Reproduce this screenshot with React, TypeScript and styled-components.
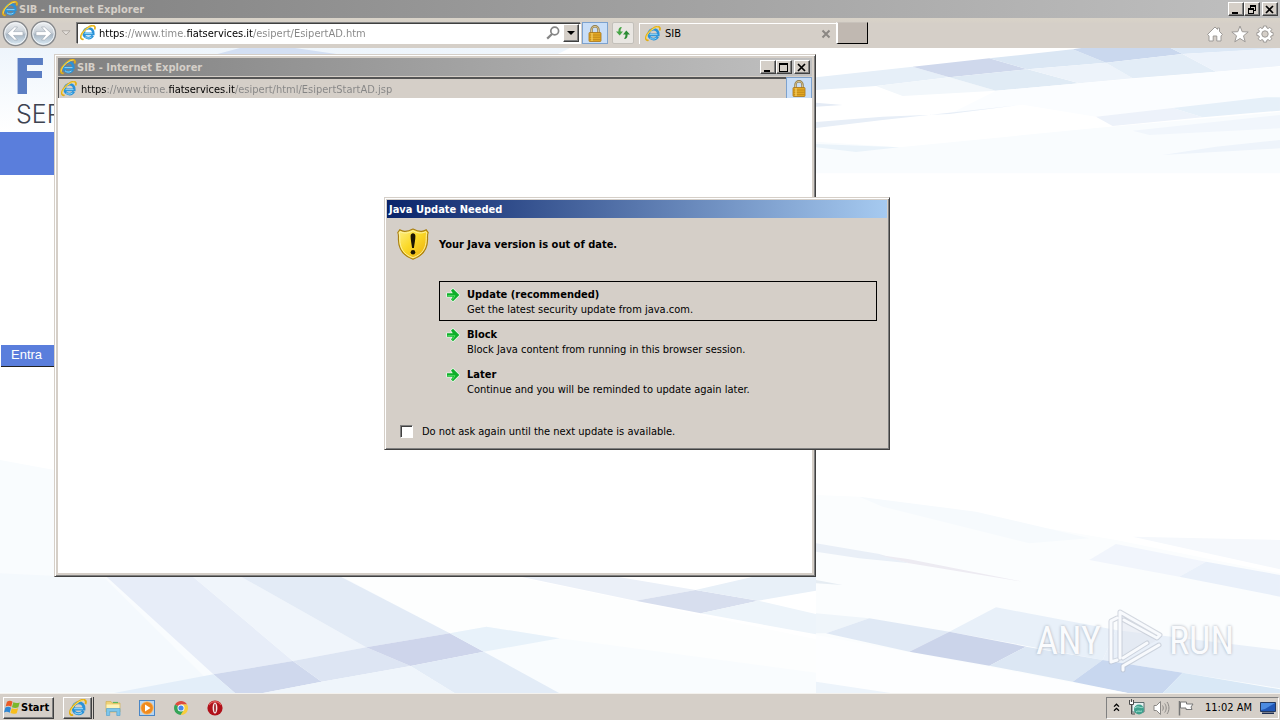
import React from "react";
import styled, { createGlobalStyle, css } from "styled-components";

const face = "#d5cfc8";
const shade = "#808080";
const dark = "#404040";
const uiFont = `"DejaVu Sans Condensed", "DejaVu Sans", sans-serif`;

const GlobalStyle = createGlobalStyle`
  *, *::before, *::after { box-sizing: border-box; }
  body { margin: 0; background: #fff; }
  button, input { font: inherit; color: inherit; margin: 0; padding: 0; }
  svg { display: block; flex: none; }
`;

const Screen = styled.div`
  position: relative;
  display: flex;
  flex-direction: column;
  min-height: 100vh;
  overflow: hidden;
  font: 11px/14px ${uiFont};
  color: #000;
`;

const raised = css`
  border: 1px solid;
  border-color: #fff ${dark} ${dark} #fff;
  box-shadow: inset -1px -1px 0 ${shade};
  background: ${face};
`;

const TitleBar = styled.header<{ $active?: boolean }>`
  display: flex;
  align-items: center;
  height: 18px;
  padding: 0 2px;
  gap: 1px;
  font-weight: bold;
  color: ${(p) => (p.$active ? "#fff" : face)};
  background: ${(p) =>
    p.$active
      ? "linear-gradient(90deg, #0a246a, #a6caf0)"
      : "linear-gradient(90deg, #808080, #c0c0c0)"};
`;

const TitleText = styled.h1`
  flex: 1;
  margin: 0;
  padding-top: 1px;
  font: inherit;
  white-space: nowrap;
`;

const CaptionButtons = styled.div`
  display: flex;
  & > :last-child { margin-left: 2px; }
`;

const CaptionButton = styled.button`
  ${raised}
  display: grid;
  place-items: center;
  width: 16px;
  height: 14px;
  color: #000;
`;

const Toolbar = styled.nav`
  display: flex;
  align-items: center;
  height: 30px;
  padding: 0 6px 0 2px;
  background: linear-gradient(#d9d3c8, ${face} 6px);
`;

const IconButton = styled.button`
  display: grid;
  place-items: center;
  border: 0;
  background: none;
`;

const History = styled.div`
  display: flex;
  gap: 1px;
  margin-right: 4px;
`;

const AddressBox = styled.div`
  display: flex;
  align-items: center;
  width: 504px;
  height: 21px;
  margin: 0 1px 0 6px;
  padding: 0 1px 0 2px;
  gap: 3px;
  background: #fff;
  border: 1px solid;
  border-color: ${dark} #fff #fff ${dark};
  box-shadow: -1px -1px 0 ${shade};
`;

const Address = styled.input<{ $from: number; $to: number; $scheme: number }>`
  flex: 1;
  min-width: 0;
  height: 17px;
  padding-top: 1px;
  border: 0;
  outline: 0;
  color: #777;
  -webkit-text-fill-color: transparent;
  background: linear-gradient(
    90deg,
    #000 ${(p) => p.$scheme}px,
    #858585 ${(p) => p.$scheme}px ${(p) => p.$from}px,
    #000 ${(p) => p.$from}px ${(p) => p.$to}px,
    #858585 ${(p) => p.$to}px
  );
  background-clip: text;
  -webkit-background-clip: text;
`;

const DropButton = styled.button`
  ${raised}
  display: grid;
  place-items: center;
  width: 16px;
  height: 18px;
`;

const LockButton = styled.button`
  display: grid;
  place-items: center;
  width: 26px;
  height: 22px;
  border: 1px solid #7da2ce;
  background: #c9def7;
`;

const RefreshButton = styled(LockButton)`
  width: 22px;
  margin: 0 5px 0 4px;
  border-color: #c3c0ba;
  border-radius: 2px;
  background: #e9e6e2;
`;

const Tab = styled.div`
  display: flex;
  align-items: center;
  gap: 4px;
  width: 197px;
  height: 21px;
  padding: 0 5px;
  border-top: 1px solid #fff;
  border-left: 1px solid #fff;
`;

const TabLabel = styled.span`
  flex: 1;
  padding-top: 1px;
`;

const NewTab = styled.button`
  width: 32px;
  height: 22px;
  border: solid;
  border-width: 1px 1px 1px 2px;
  border-color: #c8c2bb #000 #000 #fff;
  outline: 0;
  background: #c0b8b1;
  margin-right: auto;
`;

const Tools = styled.div`
  display: flex;
  gap: 7px;
  padding-top: 2px;
`;

const Desktop = styled.main`
  position: relative;
  display: flex;
  flex-direction: column;
  align-items: flex-start;
  flex: 1;
  overflow: hidden;
`;

const Backdrop = styled.svg`
  position: absolute;
  inset: 0;
  width: 100%;
  height: 100%;
`;

const Site = styled.section`
  position: relative;
  width: 400px;
`;

const Brand = styled.div`
  padding-left: 13px;
  font: bold 50px/58px "DejaVu Sans", sans-serif;
  color: #5a7dc3;
`;

const BrandLine = styled.div`
  padding: 0 0 10px 16px;
  font: 300 25px/16px Inter, sans-serif;
  color: #3d4350;
`;

const SiteBar = styled.div`
  height: 43px;
  background: #5a7edc;
`;

const EnterButton = styled.button`
  height: 22px;
  width: 70px;
  margin: 170px 0 0 1px;
  padding: 0 0 2px 10px;
  text-align: left;
  font: 13px/18px "Liberation Sans", sans-serif;
  color: #fff;
  background: #5a7edc;
  border: 0;
  border-bottom: 1px solid #222;
`;

const Watermark = styled.div`
  position: absolute;
  right: 46px;
  bottom: 20px;
  display: flex;
  align-items: center;
  gap: 4px;
  font: 400 38px/64px "Roboto Condensed", "Open Sans Condensed", Roboto, sans-serif;
  color: #fafbfd;
  text-shadow: 0 0 3px #a4abb7;
`;

const frame = css`
  position: absolute;
  display: flex;
  flex-direction: column;
  border: 1px solid;
  border-color: ${face} ${dark} ${dark} ${face};
  box-shadow: inset 1px 1px 0 #fff, inset -1px -1px 0 ${shade};
  background: ${face};
`;

const Popup = styled.section`
  ${frame}
  left: 54px;
  top: 54px;
  width: 762px;
  height: 523px;
  padding: 3px;
`;

const PopupBar = styled.div`
  display: flex;
  height: 22px;
  border-top: 1px solid ${face};
`;

const PopupAddress = styled.div`
  flex: 1;
  display: flex;
  align-items: center;
  gap: 4px;
  padding-left: 2px;
  border-top: 2px solid #555;
  border-left: 1px solid #555;
`;

const PopupPage = styled.div`
  flex: 1;
  background: #fff;
`;

const Dialog = styled.section`
  ${frame}
  left: 384px;
  top: 197px;
  width: 506px;
  padding: 2px;
`;

const DialogBody = styled.div`
  padding: 10px 10px 7px;
`;

const Notice = styled.div`
  display: flex;
  align-items: center;
  gap: 10px;
  height: 32px;
`;

const Strong = styled.strong`
  display: block;
  line-height: 15px;
`;

const Choices = styled.div`
  display: flex;
  flex-direction: column;
  margin: 21px 0 22px 42px;
`;

const Choice = styled.button<{ $focused?: boolean }>`
  display: flex;
  gap: 6px;
  padding: 5px 5px 3px;
  border: 1px solid ${(p) => (p.$focused ? "#000" : "transparent")};
  background: none;
  text-align: left;
  line-height: 15px;
`;

const Check = styled.label`
  display: flex;
  align-items: center;
  gap: 9px;
  height: 17px;
  padding-left: 3px;
`;

const CheckBox = styled.input`
  appearance: none;
  width: 13px;
  height: 13px;
  background: #fff;
  border: 1px solid;
  border-color: ${shade} #fff #fff ${shade};
  box-shadow: inset 1px 1px 0 ${dark};
`;

const Taskbar = styled.footer`
  display: flex;
  align-items: center;
  height: 27px;
  padding: 1px 1px 0 3px;
  border-top: 1px solid #f4f2ee;
  background: ${face};
`;

const StartButton = styled.button`
  ${raised}
  display: flex;
  align-items: center;
  width: 51px;
  height: 22px;
  font-weight: bold;
`;

const TaskGroup = styled.div`
  display: flex;
  width: 31px;
  height: 22px;
  margin: 0 10px 0 9px;
  border-right: 1px solid ${dark};
`;

const TaskButton = styled.button`
  ${raised}
  flex: 1;
  display: grid;
  place-items: center;
  margin-right: 1px;
`;

const Launchers = styled.div`
  display: flex;
  gap: 16px;
  flex: 1;
`;

const Tray = styled.div`
  display: flex;
  align-items: center;
  gap: 8px;
  width: 173px;
  height: 22px;
  padding: 0 2px 0 6px;
  border: 1px solid;
  border-color: ${shade} #fff #fff ${shade};
`;

const Clock = styled.time`
  flex: 1;
  text-align: right;
  white-space: nowrap;
`;

const IeIcon = ({ size = 16 }: { size?: number }) => (
  <svg width={size} height={size} viewBox="0 0 16 16" fill="none" aria-hidden="true">
    <path d="M4 8.900h9.300c.2-3.700-2-5.600-4.700-5.600-2.900 0-4.900 2.100-4.900 4.900s2 4.900 4.900 4.900c1.900 0 3.400-.9 4.200-2.400" stroke="#2a92d8" strokeWidth="2.600" />
    <path d="M4.500 8.600h8M3.400 7.500C4 5 6 3.200 8.500 3.200M5 11.800c1.500 1.500 4.500 1.800 6.500.2" stroke="#8ad4f8" strokeWidth="1" />
    <path d="M3.600 14.200C.4 15 0 11.700 2.200 8.300 5.200 3.600 11-.3 14 .9c1.300.6 1.200 2 .6 3.600" stroke="#e3ae12" strokeWidth="1.700" />
    <path d="M1.500 12.500C1 10.500 3.500 6.500 6.500 4.100 9 2.100 12 .8 13.500 1.200" stroke="#fbe472" strokeWidth=".8" />
  </svg>
);

const NavIcon = ({ back }: { back?: boolean }) => (
  <svg width="27" height="27" viewBox="0 0 27 27" aria-hidden="true">
    <defs>
      <linearGradient id={back ? "orbB" : "orbF"} x1="0" y1="0" x2="0" y2="1">
        <stop offset="0" stopColor="#f1f3f5" />
        <stop offset=".48" stopColor="#c6ced6" />
        <stop offset=".55" stopColor="#a9b7c4" />
        <stop offset="1" stopColor="#dcecf7" />
      </linearGradient>
    </defs>
    <circle cx="13.500" cy="13.500" r="12" fill={`url(#${back ? "orbB" : "orbF"})`} stroke="#87898c" strokeWidth="1.400" />
    <circle cx="13.500" cy="13.500" r="10.800" fill="none" stroke="#f4f7fa" strokeWidth="1" />
    <path
      transform={back ? undefined : "matrix(-1 0 0 1 27 0)"}
      d="M5.500 13.500l7-6.500h3l-4 4.600h9.500v3.800h-9.500l4 4.600h-3z"
      fill="#fff"
      stroke="#9aa5b0"
      strokeWidth=".6"
    />
  </svg>
);

const LockIcon = () => (
  <svg width="14" height="17" viewBox="0 0 14 17" aria-hidden="true">
    <path d="M3.500 8V4.800a3.500 3.500 0 0 1 7 0V8" fill="none" stroke="#8f7b4c" strokeWidth="2.400" />
    <path d="M3.500 8V4.800a3.500 3.500 0 0 1 7 0V8" fill="none" stroke="#d8c48c" strokeWidth="1" />
    <rect x="1" y="7.500" width="12" height="9" rx=".8" fill="#e2a824" stroke="#a87416" strokeWidth=".8" />
    <path d="M1.500 10h11M1.500 12.300h11M1.500 14.600h11" stroke="#bd8418" strokeWidth=".8" />
    <path d="M4 8v8" stroke="#f7d26a" strokeWidth="1.200" />
  </svg>
);

const SearchIcon = () => (
  <svg width="14" height="14" viewBox="0 0 14 14" fill="none" stroke="#858585" aria-hidden="true">
    <circle cx="8.700" cy="5" r="3.900" strokeWidth="1.700" />
    <path d="M6 8L1.200 12.600" strokeWidth="2.200" />
  </svg>
);

const RefreshIcon = () => (
  <svg width="16" height="14" viewBox="0 0 16 14" aria-hidden="true">
    <path d="M5.800 1C3.800 1.600 3.300 3.500 3.500 5.500H1L4.700 9.600 8 5.500H5.600C5.400 4 5.600 2.700 7 1.500z" fill="#46a546" />
    <path d="M10.200 13c2-.6 2.500-2.500 2.300-4.500H15l-3.700-4.100L8 8.500h2.400c.2 1.500 0 2.800-1.400 4z" fill="#2b8b34" />
  </svg>
);

const MinimizeGlyph = () => (
  <svg width="10" height="9" viewBox="0 0 10 9" aria-hidden="true"><path d="M1 7h6v2H1z" /></svg>
);
const MaximizeGlyph = () => (
  <svg width="10" height="9" viewBox="0 0 10 9" aria-hidden="true"><path fillRule="evenodd" d="M0 0h9v9H0zM1 2v6h7V2z" /></svg>
);
const RestoreGlyph = () => (
  <svg width="10" height="9" viewBox="0 0 10 9" aria-hidden="true">
    <path fillRule="evenodd" d="M3 0h6v6H7V5h1V2H4v1H3zM1 3h6v6H1zM2 5v3h4V5z" />
  </svg>
);
const CloseGlyph = () => (
  <svg width="10" height="9" viewBox="0 0 10 9" aria-hidden="true"><path d="M1 1l7 7M8 1L1 8" stroke="#000" strokeWidth="1.700" /></svg>
);
const DropGlyph = () => (
  <svg width="8" height="4" viewBox="0 0 8 4" aria-hidden="true"><path d="M0 0h8L4 4z" /></svg>
);
const RecentGlyph = () => (
  <svg width="10" height="6" viewBox="0 0 10 6" aria-hidden="true"><path d="M1 .8h8L5 5z" fill="#e4e0dc" stroke="#a9a49e" strokeWidth=".9" /></svg>
);

const outline = { fill: "#fff", stroke: "#9d9a97", strokeWidth: 1 };

const HomeIcon = () => (
  <svg width="18" height="18" viewBox="0 0 18 18" aria-hidden="true">
    <path {...outline} d="M9 2L1.500 9.500 3 10.800V16h4.200v-5h3.600v5H15v-5.200l1.500-1.300-3-3V3H11.500v1.400z" />
  </svg>
);
const StarIcon = () => (
  <svg width="18" height="18" viewBox="0 0 18 18" aria-hidden="true">
    <path {...outline} d="M9 1l2.200 5.700 6 .3-4.700 3.800 1.700 6L9 13.500l-5.200 3.300 1.700-6L.8 7l6-.3z" />
  </svg>
);
const GearIcon = () => (
  <svg width="18" height="18" viewBox="0 0 18 18" aria-hidden="true">
    <path
      {...outline}
      fillRule="evenodd"
      d="M7.500 1h3l.4 2 1.200.5L13.800 2.400l2 2-1.200 1.700.5 1.200 2 .4v2.800l-2 .4-.5 1.200 1.200 1.700-2 2-1.700-1.200-1.200.5-.4 2h-3l-.4-2-1.200-.5-1.700 1.200-2-2 1.200-1.700-.5-1.200-2-.4V7.700l2-.4.5-1.200L2.200 4.400l2-2 1.700 1.100L7.100 3zM9 5.800a3.200 3.200 0 1 0 0 6.400 3.200 3.200 0 0 0 0-6.400z"
    />
  </svg>
);

const ShieldIcon = () => (
  <svg width="32" height="32" viewBox="0 0 32 32" aria-hidden="true">
    <defs>
      <linearGradient id="gold" x1="0" y1="0" x2="1" y2="1">
        <stop offset="0" stopColor="#fdf08a" />
        <stop offset=".45" stopColor="#fbd928" />
        <stop offset="1" stopColor="#e9a90c" />
      </linearGradient>
    </defs>
    <path d="M16 1c-3 1.600-5.500 2.600-8.500 2.400C5.500 3.200 4 2.500 2.800 1.800L.8 4.500c1 2 .6 4 .6 7C1.600 20.500 5 27.500 16 31.200c11-3.700 14.400-10.700 14.600-19.700 0-3-.4-5 .6-7l-2-2.700c-1.200.7-2.700 1.400-4.700 1.600C21.500 3.600 19 2.600 16 1z" fill="url(#gold)" stroke="#a87e10" strokeWidth="1.100" />
    <path d="M16 2.700c-3 1.600-5.700 2.500-8.700 2.200-1.600-.2-3-.6-4.100-1.200L2.200 5c.7 2 .5 4 .6 6.500C3 20 6.300 26.300 16 29.800c9.700-3.500 13-9.800 13.200-18.300.1-2.500-.1-4.500.6-6.500l-1-1.300c-1.100.6-2.500 1-4.100 1.200-3 .3-5.700-.6-8.700-2.200z" fill="none" stroke="#fdf3a8" strokeWidth=".9" />
    <path d="M13.600 8c0-3.600 4.800-3.600 4.800 0 0 4-1 8-1.500 12h-1.800c-.5-4-1.500-8-1.500-12z" fill="#1c1503" />
    <circle cx="16" cy="24.300" r="2.300" fill="#1c1503" />
  </svg>
);

const ArrowIcon = () => (
  <svg width="16" height="16" viewBox="0 0 16 16" aria-hidden="true">
    <path d="M2 6.300h5.800L6 3.500 8 1.800 14.300 8 8 14.200 6 12.500l1.800-2.800H2z" fill="#0fae2b" stroke="#eaf8ea" strokeWidth="1.600" strokeLinejoin="round" paintOrder="stroke" />
    <path d="M2.500 8.700h7.500L7.500 12.500" fill="none" stroke="#4ee060" strokeWidth="1" />
  </svg>
);

const WindowsIcon = () => (
  <svg width="17" height="17" viewBox="0 0 16 16" aria-hidden="true">
    <path d="M2.800 2.500C5 1.300 6.500 1.500 8 2.600L6.800 7.300C5.200 6.300 3.500 6.200 1.500 7z" fill="#ea5a24" />
    <path d="M8.800 3c1.800 1 3.700 1 6 .2l-1.300 4.600c-2 .8-4 .8-6-.1z" fill="#7ab82c" />
    <path d="M1.300 8c2-.9 3.700-.8 5.300.2l-1.200 4.700C3.800 12 2 11.800 0 12.600z" fill="#2f87d3" />
    <path d="M7.300 8.600c2 1 4 .9 6 .1L12 13.300c-2 .8-4 .8-5.900-.1z" fill="#f8be1c" />
  </svg>
);

const FolderIcon = () => (
  <svg width="18" height="18" viewBox="0 0 18 18" aria-hidden="true">
    <path d="M2 2.500h5l1 1.500h8V13H2z" fill="#efd276" stroke="#d3b254" strokeWidth=".7" />
    <path d="M2.500 5.500h13v4h-13z" fill="#fdf3b8" />
    <path d="M2.500 9.500h13.500v7h-3.200V12.500H5.700v4H2.500z" fill="#7cc6ec" stroke="#5aa5d0" strokeWidth=".7" />
    <path d="M9 3.500h5" stroke="#5cb85c" strokeWidth="1.200" />
  </svg>
);

const PlayerIcon = () => (
  <svg width="18" height="18" viewBox="0 0 18 18" aria-hidden="true">
    <rect x="1.500" y="1.500" width="15" height="15" fill="#b6d5f2" stroke="#4a86c5" />
    <circle cx="9" cy="9" r="6.300" fill="#f08a1d" stroke="#f9c37c" strokeWidth=".8" />
    <path d="M7 5.500v7l5.500-3.500z" fill="#fff" />
  </svg>
);

const ChromeIcon = () => (
  <svg width="18" height="18" viewBox="0 0 18 18" aria-hidden="true">
    <path d="M9 9L3 5.500A7 7 0 0 1 15.100 5.500H9z" fill="#dd4b3e" />
    <path d="M9 9l.2 7A7 7 0 0 0 15.100 5.500H9z" fill="#f8cd3c" />
    <path d="M9 9L3 5.500A7 7 0 0 0 8.500 16L12 10.800z" fill="#35a457" />
    <circle cx="9" cy="9" r="3.500" fill="#fff" />
    <circle cx="9" cy="9" r="2.600" fill="#4788e8" />
  </svg>
);

const OperaIcon = () => (
  <svg width="18" height="18" viewBox="0 0 18 18" aria-hidden="true">
    <circle cx="9" cy="9" r="7.600" fill="#b01019" />
    <path d="M3 6a7 7 0 0 1 12 0" fill="none" stroke="#e2605f" strokeWidth="1.200" />
    <ellipse cx="9" cy="9" rx="2.400" ry="5.600" fill="#f6e6e6" />
    <ellipse cx="9" cy="9" rx=".8" ry="4.200" fill="#8f0b12" />
  </svg>
);

const ChevronsIcon = () => (
  <svg width="7" height="9" viewBox="0 0 7 9" fill="none" stroke="#000" strokeWidth="1.300" aria-hidden="true">
    <path d="M1 3.600l2.500-2.400L6 3.600M1 7.800l2.500-2.400L6 7.800" />
  </svg>
);
const NetworkIcon = () => (
  <svg width="17" height="17" viewBox="0 0 17 17" aria-hidden="true">
    <path d="M4 3.500h12V13H4z" fill="#e9f3f3" stroke="#5d6c6e" />
    <circle cx="11" cy="10.500" r="5" fill="#3fa08d" />
    <path d="M7 9c3-3 6 1 8-1M8 13c2-2 4 0 6-1" stroke="#a4e2d2" fill="none" />
    <path d="M1.500 2.500h4v3h-4z" fill="#fff" />
    <path d="M1.500 1v4.500h4V1M3.500 0v3M3.500 5.500V15H7" stroke="#4c4c4c" fill="none" />
  </svg>
);
const SpeakerIcon = () => (
  <svg width="17" height="16" viewBox="0 0 17 16" fill="none" stroke="#8b8885" aria-hidden="true">
    <path d="M1 5.500h2.500L7.500 1.500v13l-4-4H1z" fill="#fff" />
    <path d="M9.500 5.500c1 1.500 1 3.500 0 5M11.700 3.500c2 2.700 2 6.300 0 9M14 2c2.600 3.500 2.600 8.500 0 12" />
  </svg>
);
const FlagIcon = () => (
  <svg width="16" height="16" viewBox="0 0 16 16" aria-hidden="true">
    <path d="M1.500 1v14.500" stroke="#777" strokeWidth="1.500" />
    <path d="M2.500 2h6v2H15l-2 3 1 2.500H8V8H2.500z" fill="#fff" stroke="#777" />
  </svg>
);
const DisplayIcon = () => (
  <svg width="16" height="14" viewBox="0 0 16 14" aria-hidden="true">
    <path d="M.5 1.500h15v9H.5z" fill="#2157b5" stroke="#24395f" />
    <path d="M1 2h14L5 8 1 9z" fill="#4c8be0" />
    <path d="M2 11.500h12v1.500H2z" fill="#1c2d52" />
  </svg>
);
const PlayMark = () => (
  <svg width="60" height="64" viewBox="0 0 60 64" fill="none" strokeLinejoin="round" strokeLinecap="round" aria-hidden="true">
    <path d="M15 4v46L51 32z" fill="#dfe4ee" opacity=".5" />
    <g stroke="#b9c0cc" strokeWidth="5" opacity=".6">
      <path d="M12 9L6 12v41l6-2M15 49V3l40 23-3 3L19 11M18 49l24-15M18 61v-4l36-21" />
    </g>
    <g stroke="#f8fafd" strokeWidth="3">
      <path d="M12 9L6 12v41l6-2M15 49V3l40 23-3 3L19 11M18 49l24-15M18 61v-4l36-21" />
    </g>
  </svg>
);

type Tile = [points: string, fill: string];

const upperTiles: Tile[] = [
  ["0,112 290,80 400,112 180,138 0,150", "#e6eff8"],
  ["290,80 520,55 635,88 400,112", "#cfd8ec"],
  ["520,55 770,28 870,68 635,88", "#dbe7f4"],
  ["770,28 810,22 1060,22 1100,42 870,68", "#cad8ee"],
  ["1060,22 1392,22 1392,26 1100,42", "#dce8f6"],
  ["180,138 400,112 540,152 260,168", "#f2f7fb"],
  ["400,112 635,88 790,130 540,152", "#e0ebf5"],
  ["635,88 870,68 950,115 790,130", "#edf3fa"],
  ["870,68 1100,42 1200,95 950,115", "#e3edf7"],
  ["1100,42 1392,24 1392,78 1200,95", "#edf3fb"],
  ["790,130 1392,80 1392,172 840,230 620,194 400,222 540,152", "#fbfdff"],
  ["0,246 200,230 400,222 620,194 200,240 0,264", "#e7eef7"],
  ["0,188 80,195 0,200", "#e4ebf5"],
  ["840,230 1070,204 1160,232 890,258", "#edf2fa"],
  ["1070,204 1350,172 1392,172 1392,212 1160,232", "#e6f0f9"],
  ["0,305 250,322 840,264 1392,216 1392,400 0,400", "#f9fcfe"],
  ["0,312 250,322 120,336 0,322", "#eaf3fa"],
  ["950,272 1392,225 1392,265 1000,285", "#f1f6fc"],
  ["1200,320 1392,300 1392,325 1040,345", "#eef4fb"],
];

const lowerTiles: Tile[] = [
  ["0,285 130,290 900,420 1392,520 1392,877 0,877", "#fbfdfe"],
  ["130,290 480,335 820,415 640,430 200,320", "#f6fafd"],
  ["0,430 190,462 280,490 130,475 0,455", "#e9eff7"],
  ["190,465 280,478 620,545 280,490", "#edebf2"],
  ["0,540 80,555 0,550", "#e6edf3"],
  ["900,432 1170,485 1090,530 820,480", "#f1f5fc"],
  ["1170,485 1392,525 1392,590 1090,530", "#e9f0fa"],
  ["950,410 1392,420 1392,508", "#f5f8fc"],
  ["0,640 160,655 30,700 0,700", "#eff5fa"],
  ["160,655 400,695 280,755 30,700", "#e0e9f5"],
  ["540,622 900,690 860,780 400,695", "#e8f0f9"],
  ["900,690 1392,750 1392,865 1100,818 860,780", "#e9f0f9"],
  ["400,695 630,740 520,797 280,755", "#cbd4ea"],
  ["630,740 860,780 770,845 520,797", "#dce7f4"],
  ["860,780 1100,818 1040,880 940,880 770,845", "#c8d7ef"],
  ["1100,818 1392,868 1392,880 1040,880", "#d9e8f6"],
  ["0,705 940,880 0,880", "#fdfeff"],
  ["0,845 230,880 0,880", "#edf4fb"],
];

const leftTiles: Tile[] = [
  ["0,300 104,330 104,650 800,650 1568,850 1568,1000 0,1000", "#f9fcfe"],
  ["0,640 200,655 420,997 0,997", "#f4f9fd"],
  ["660,655 1000,655 1568,840 1568,940 1070,835 930,800 860,820", "#fdfefe"],
  ["200,645 365,645 560,903 408,943", "#e7edf8"],
  ["365,645 455,645 700,862 560,903", "#f0f5fb"],
  ["455,645 645,645 860,820 700,862", "#e3ebf6"],
  ["408,943 560,903 615,965 500,1000 450,1000", "#cfd8ed"],
  ["560,903 700,862 785,918 615,965", "#dde5f3"],
  ["700,862 860,820 925,875 785,918", "#ced5eb"],
  ["860,820 930,800 1070,835 925,875", "#e8f2fa"],
  ["785,918 925,875 1070,1000 870,1000", "#e3ecf7"],
  ["615,965 785,918 870,1000 500,1000", "#eff5fb"],
  ["408,943 450,1000 215,1000", "#e3eef9"],
  ["980,645 1160,645 1330,690 1215,722", "#ebf0f8"],
  ["1215,722 1330,690 1450,722 1340,760", "#d7deee"],
  ["1330,690 1440,650 1568,650 1568,690 1450,722", "#e8f0f8"],
  ["1340,760 1450,722 1568,765 1568,825", "#edf4fa"],
];

const Tiles = ({ tiles }: { tiles: Tile[] }) => (
  <>
    {tiles.map(([points, fill]) => (
      <polygon key={points} points={points} fill={fill} />
    ))}
  </>
);

const choices = [
  { title: "Update (recommended)", text: "Get the latest security update from java.com." },
  { title: "Block", text: "Block Java content from running in this browser session." },
  { title: "Later", text: "Continue and you will be reminded to update again later." },
];

export default function App() {
  return (
    <Screen>
      <GlobalStyle />
      <TitleBar>
        <IeIcon />
        <TitleText>SIB - Internet Explorer</TitleText>
        <CaptionButtons>
          <CaptionButton aria-label="Minimize"><MinimizeGlyph /></CaptionButton>
          <CaptionButton aria-label="Restore"><RestoreGlyph /></CaptionButton>
          <CaptionButton aria-label="Close"><CloseGlyph /></CaptionButton>
        </CaptionButtons>
      </TitleBar>
      <Toolbar>
        <History>
          <IconButton aria-label="Back"><NavIcon back /></IconButton>
          <IconButton aria-label="Forward"><NavIcon /></IconButton>
        </History>
        <IconButton aria-label="Recent pages"><RecentGlyph /></IconButton>
        <AddressBox>
          <IeIcon />
          <Address aria-label="Address" defaultValue="https://www.time.fiatservices.it/esipert/EsipertAD.htm" $scheme={26} $from={88} $to={154} />
          <IconButton aria-label="Search"><SearchIcon /></IconButton>
          <DropButton aria-label="Show addresses"><DropGlyph /></DropButton>
        </AddressBox>
        <LockButton aria-label="Security report"><LockIcon /></LockButton>
        <RefreshButton aria-label="Refresh"><RefreshIcon /></RefreshButton>
        <Tab>
          <IeIcon />
          <TabLabel>SIB</TabLabel>
          <IconButton aria-label="Close tab">
            <svg width="10" height="10" viewBox="0 0 10 10" aria-hidden="true"><path d="M1.500 1.500l7 7M8.500 1.500l-7 7" stroke="#8b8783" strokeWidth="2" /></svg>
          </IconButton>
        </Tab>
        <NewTab aria-label="New tab" />
        <Tools>
          <IconButton aria-label="Home"><HomeIcon /></IconButton>
          <IconButton aria-label="Favorites"><StarIcon /></IconButton>
          <IconButton aria-label="Tools"><GearIcon /></IconButton>
        </Tools>
      </Toolbar>

      <Desktop>
        <Backdrop viewBox="0 48 1280 645" preserveAspectRatio="xMidYMid slice" aria-hidden="true">
          <defs>
            <linearGradient id="wash" x1="0" y1="0" x2="0" y2="1">
              <stop offset="0" stopColor="#eef5fc" />
              <stop offset="1" stopColor="#ffffff" />
            </linearGradient>
          </defs>
          <polygon points="0,48 570,48 400,132 0,132" fill="url(#wash)" />
          <polygon points="240,48 295,48 350,56 210,56" fill="#d3dff3" />
          <g transform="translate(816 40) scale(.3333)"><Tiles tiles={upperTiles} /></g>
          <g transform="translate(0 360) scale(.523 .3333)"><Tiles tiles={leftTiles} /></g>
          <g transform="translate(816 400) scale(.3333)"><Tiles tiles={lowerTiles} /></g>
        </Backdrop>
        <Site>
          <Brand>F</Brand>
          <BrandLine>SER</BrandLine>
          <SiteBar />
          <EnterButton>Entra</EnterButton>
        </Site>
        <Watermark>
          <span>ANY</span>
          <PlayMark />
          <span>RUN</span>
        </Watermark>
      </Desktop>

      <Taskbar>
        <StartButton><WindowsIcon />Start</StartButton>
        <TaskGroup>
          <TaskButton aria-label="Internet Explorer"><IeIcon size={18} /></TaskButton>
        </TaskGroup>
        <Launchers>
          <IconButton aria-label="Explorer"><FolderIcon /></IconButton>
          <IconButton aria-label="Media Player"><PlayerIcon /></IconButton>
          <IconButton aria-label="Chrome"><ChromeIcon /></IconButton>
          <IconButton aria-label="Opera"><OperaIcon /></IconButton>
        </Launchers>
        <Tray>
          <ChevronsIcon />
          <NetworkIcon />
          <SpeakerIcon />
          <FlagIcon />
          <Clock>11:02 AM</Clock>
          <DisplayIcon />
        </Tray>
      </Taskbar>

      <Popup>
        <TitleBar>
          <IeIcon />
          <TitleText>SIB - Internet Explorer</TitleText>
          <CaptionButtons>
            <CaptionButton aria-label="Minimize"><MinimizeGlyph /></CaptionButton>
            <CaptionButton aria-label="Maximize"><MaximizeGlyph /></CaptionButton>
            <CaptionButton aria-label="Close"><CloseGlyph /></CaptionButton>
          </CaptionButtons>
        </TitleBar>
        <PopupBar>
          <PopupAddress>
            <IeIcon />
            <Address readOnly aria-label="Address" defaultValue="https://www.time.fiatservices.it/esipert/html/EsipertStartAD.jsp" $scheme={26} $from={88} $to={154} />
          </PopupAddress>
          <LockButton aria-label="Security report"><LockIcon /></LockButton>
        </PopupBar>
        <PopupPage />
      </Popup>

      <Dialog role="dialog" aria-label="Java Update Needed">
        <TitleBar $active>
          <TitleText>Java Update Needed</TitleText>
        </TitleBar>
        <DialogBody>
          <Notice>
            <ShieldIcon />
            <Strong>Your Java version is out of date.</Strong>
          </Notice>
          <Choices>
            {choices.map((choice, index) => (
              <Choice key={choice.title} $focused={index === 0}>
                <ArrowIcon />
                <span>
                  <Strong>{choice.title}</Strong>
                  {choice.text}
                </span>
              </Choice>
            ))}
          </Choices>
          <Check>
            <CheckBox type="checkbox" />
            Do not ask again until the next update is available.
          </Check>
        </DialogBody>
      </Dialog>
    </Screen>
  );
}
